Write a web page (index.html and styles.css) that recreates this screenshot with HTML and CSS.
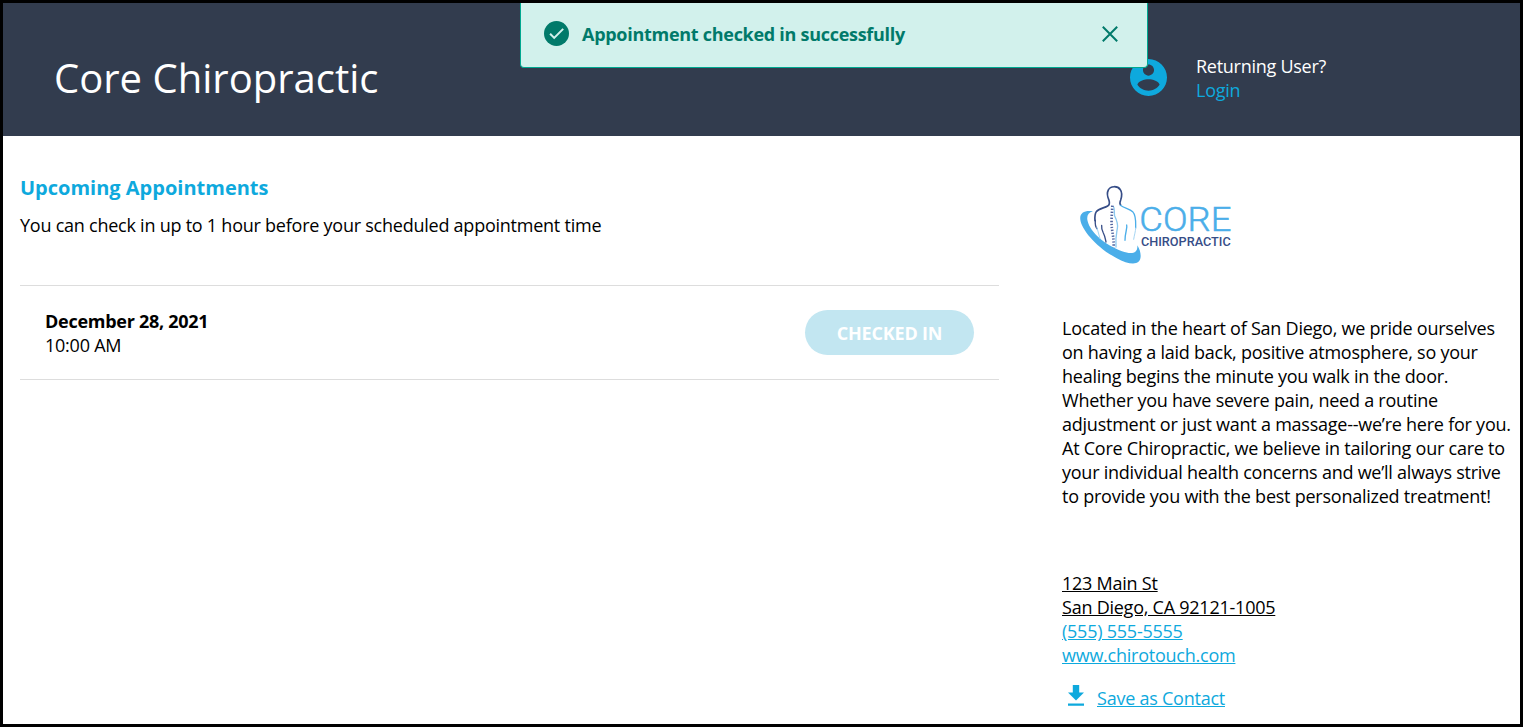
FILE: index.html
```html
<!DOCTYPE html>
<html lang="en">
<head>
<meta charset="utf-8">
<title>Core Chiropractic</title>
<link rel="stylesheet" href="styles.css">
</head>
<body>
<div class="page">
  <header class="header">
    <h1 class="title">Core Chiropractic</h1>
    <div class="user">
      <svg class="user-icon" viewBox="2 2 20 20"><path fill="#0ea9dd" d="M12 2C6.48 2 2 6.48 2 12s4.48 10 10 10 10-4.48 10-10S17.52 2 12 2zm0 3c1.66 0 3 1.34 3 3s-1.34 3-3 3-3-1.34-3-3 1.34-3 3-3zm0 14.2c-2.5 0-4.71-1.28-6-3.22.03-1.99 4-3.08 6-3.08 1.99 0 5.97 1.09 6 3.08-1.29 1.94-3.5 3.22-6 3.22z"/></svg>
      <div class="user-text"><span class="returning">Returning User?</span><a class="login">Login</a></div>
    </div>
    <div class="toast">
      <svg class="toast-check" viewBox="0 0 25 25"><circle cx="12.5" cy="12.5" r="12.5" fill="#017a6a"/><path d="M6.1 12.8l4.1 4.1 9-9" fill="none" stroke="#d2f1ec" stroke-width="2"/></svg>
      <span class="toast-text">Appointment checked in successfully</span>
      <svg class="toast-close" viewBox="0 0 16 16"><path d="M.8.8l14.4 14.4M15.2.8L.8 15.2" stroke="#017a6a" stroke-width="2" fill="none"/></svg>
    </div>
  </header>
  <main class="content">
    <section class="appointments">
      <h2 class="heading">Upcoming Appointments</h2>
      <p class="hint">You can check in up to 1 hour before your scheduled appointment time</p>
      <div class="appointment">
        <div class="when"><span class="date">December 28, 2021</span><span class="time">10:00 AM</span></div>
        <button class="checked" disabled>CHECKED IN</button>
      </div>
    </section>
    <aside class="about">
      <svg class="logo" viewBox="0 0 510 300">
        <path fill="#4baee9" d="M69 109C43 105 28 115 31 134c4 31 50 84 108 115 42 23 72 23 73-5 0-11-3-22-10-33 2 23-15 29-46 18C105 210 61 172 53 139c-4-15 1-26 16-30z"/>
        <g fill="none" stroke-linecap="round" stroke-linejoin="round">
          <path stroke="#364d87" stroke-width="5" d="M152 90c-4-4-2-10 0-15 4-12 4-24-1-31-8-12-30-12-36 1-5 9-2 22 2 31 2 7 2 14-4 17-10 6-27 8-34 17-5 8-5 16-4 27"/>
          <path stroke="#364d87" stroke-width="4" d="M76 136c-1 10 0 20 6 26M95 151c-1 8 1 15 5 23 5 9 6 17 8 27"/>
          <path stroke="#4baee9" stroke-width="4" d="M151 91c12 9 28 10 37 19 11 12 9 30 9 49M170 150c3 8-5 22-5 46"/>
          <path stroke="#a5d5f3" stroke-width="3" d="M197 159c0 10-4 20-6 34M81 158l9 33"/>
          <path stroke="#8bc9f0" stroke-width="4" d="M130 94c6 8 1 19 4 29 6 12 11 24 8 38-3 16-6 25-4 55"/>
          <path stroke="#5265a0" stroke-width="8" stroke-linecap="butt" stroke-dasharray="4 5" d="M127 92c-1 24-4 49-1 69 2 18 6 34 5 57"/>
        </g>
        <text class="logo-core" x="208" y="167" textLength="276" lengthAdjust="spacingAndGlyphs">CORE</text>
        <text class="logo-sub" x="213" y="212" textLength="269" lengthAdjust="spacingAndGlyphs">CHIROPRACTIC</text>
      </svg>
      <p class="blurb">Located in the heart of San Diego, we pride ourselves<br>on having a laid back, positive atmosphere, so your<br>healing begins the minute you walk in the door.<br>Whether you have severe pain, need a routine<br>adjustment or just want a massage--we’re here for you.<br>At Core Chiropractic, we believe in tailoring our care to<br>your individual health concerns and we’ll always strive<br>to provide you with the best personalized treatment!</p>
      <address class="contact">
        <a class="address">123 Main St<br>San Diego, CA 92121-1005</a>
        <a class="link">(555) 555-5555</a>
        <a class="link">www.chirotouch.com</a>
      </address>
      <div class="save">
        <svg class="download" viewBox="0 0 16 21"><path fill="#0ea9dd" d="M4.8 0h6.4v7.5H16l-8 8-8-8h4.8zM0 18.4h16v2.3H0z"/></svg>
        <a class="link">Save as Contact</a>
      </div>
    </aside>
  </main>
</div>
</body>
</html>
```
FILE: styles.css
```css
* { box-sizing: border-box; }
body { margin: 0; background: #fff; color: #000; font: 400 18px/24px "Open Sans", sans-serif; letter-spacing: -0.24px; }
h1, h2, p { margin: 0; }
.page { width: 1523px; height: 727px; border: 3px solid #000; overflow: hidden; }
.header { position: relative; height: 133px; background: #323c4e; display: flex; justify-content: space-between; padding: 0 193px 0 51px; }
.title { color: #fff; font-size: 40px; line-height: 54px; font-weight: 400; letter-spacing: 0; margin-top: 48px; }
.user { display: flex; gap: 28px; padding-top: 51px; }
.user-icon { width: 37px; height: 37px; margin: 5px 1px 0 -1px; }
.user-text { display: flex; flex-direction: column; width: 131px; white-space: nowrap; letter-spacing: -0.27px; }
.returning { color: #fff; }
.login { color: #0ea9dd; }
.toast { position: absolute; left: 517px; top: 0; width: 628px; height: 65px; display: flex; align-items: center; padding: 0 29px 3px 23px; background: #d2f1ec; border: 1px solid #00a890; border-top: 0; border-radius: 0 0 4px 4px; color: #017a6a; }
.toast-check { width: 25px; height: 25px; margin-right: 13px; }
.toast-text { flex: 1; font-weight: 700; letter-spacing: -0.28px; white-space: nowrap; }
.toast-close { width: 16px; height: 16px; }
.content { display: flex; justify-content: space-between; padding: 0 0 0 17px; }
.appointments { width: 979px; padding-top: 38px; }
.heading { color: #0ea9dd; font-size: 20px; line-height: 27px; font-weight: 700; letter-spacing: 0; }
.hint { margin: 12px 0 48px; }
.appointment { height: 95px; border-top: 1px solid #ddd; border-bottom: 1px solid #ddd; padding: 0 25px; display: flex; align-items: center; justify-content: space-between; }
.when { display: flex; flex-direction: column; }
.date { font-weight: 700; letter-spacing: -0.27px; }
.checked { width: 169px; height: 45px; border: 0; border-radius: 23px; padding: 0; background: #c2e6f1; color: #fff; font: 700 18px/24px "Open Sans", sans-serif; letter-spacing: -0.2px; }
.about { width: 458px; padding-top: 39px; }
.logo { display: block; width: 170px; height: 100px; margin-left: 8px; letter-spacing: 0; }
.logo-core { font: 300 97px Roboto, sans-serif; fill: #4baee9; stroke: #4baee9; stroke-width: 1.5px; }
.logo-sub { font: 500 40px Roboto, sans-serif; fill: #364d87; }
.blurb { margin-top: 41px; white-space: nowrap; }
.contact { margin-top: 63px; font-style: normal; display: flex; flex-direction: column; align-items: flex-start; }
.address { text-decoration: underline; }
.link { color: #0ea9dd; text-decoration: underline; }
.save { display: flex; margin-top: 19px; padding-left: 6px; gap: 13px; }
.download { width: 16px; height: 21px; margin-top: -1px; }
```
